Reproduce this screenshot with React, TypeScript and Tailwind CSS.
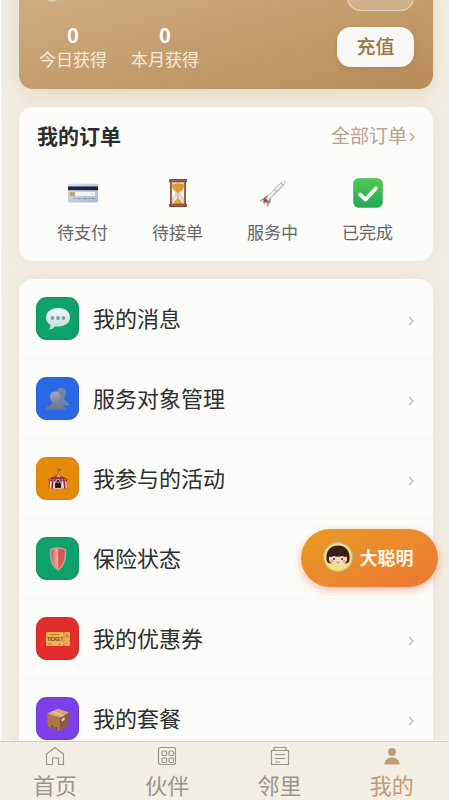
import type { ReactNode } from 'react';

function CardIcon() {
  return (
    <svg viewBox="0 0 32 32" className="size-[30px]" aria-hidden="true">
      <defs>
        <linearGradient id="card" x1="0" y1="0" x2="1" y2="1">
          <stop offset="0" stopColor="#d9e2ef" />
          <stop offset="1" stopColor="#a9bace" />
        </linearGradient>
      </defs>
      <rect x="0" y="6" width="32" height="20" rx="1.500" fill="url(#card)" />
      <rect x="0" y="9" width="32" height="4" fill="#1e2540" />
      <rect x="7" y="15" width="22" height="4" rx="1" fill="#f7f9fb" />
      <rect x="2" y="15" width="5.500" height="4.500" rx="1" fill="#bda569" />
      <path d="M6 22h3m1 0h4m2 0h4m1 0h3m1 0h4" stroke="#8797ad" strokeWidth="1" />
      <path d="M25 17h2" stroke="#9aa9bb" />
    </svg>
  );
}

function HourglassIcon() {
  return (
    <svg viewBox="0 0 32 32" className="size-[30px]" aria-hidden="true">
      <rect x="7.500" y="3" width="2" height="27" fill="#985338" />
      <rect x="22.500" y="3" width="2" height="27" fill="#985338" />
      <path d="M10 4h12v5c0 4-4 5-4 7.500s4 3.500 4 7.500v4H10v-4c0-4 4-5 4-7.500S10 13 10 9z" fill="#e4e3df" stroke="#b7aca3" strokeWidth=".7" />
      <path d="M10 7c3-1.500 9-1.500 12 0v2c0 3-4 5-6 7-2-2-6-4-6-7z" fill="#e19a28" />
      <path d="M16 14v9" stroke="#d79532" />
      <path d="M11 28c.5-3 3-5.500 5-6 2 .5 4.500 3 5 6z" fill="#eba135" />
      <rect x="6.500" y="1" width="19" height="3.500" rx=".7" fill="#8a4631" />
      <rect x="6.500" y="27.500" width="19" height="3.500" rx=".7" fill="#8a4631" />
      <path d="M8 2.500h16M8 29h16" stroke="#bc7957" strokeWidth=".7" />
    </svg>
  );
}

function RocketIcon() {
  return (
    <svg viewBox="0 0 32 32" className="size-[30px]" aria-hidden="true">
      <path d="M9 20 2.500 23l-.5 2 8-1zM14 23l-3 7-2 .5 1-7z" fill="#aaa9af" />
      <path d="M29.500 3c-4 .7-8 4.500-11 8L8 21.500l3 3L21.500 14c3.500-4 7-6 8-11z" fill="#d3d3d8" stroke="#9d9da4" strokeWidth=".6" />
      <path d="M28.500 3.500C23 9 16 15 9.500 22.500" stroke="#f7f7f8" strokeWidth="1.500" fill="none" />
      <path d="m24.500 5.500 2 2M17.500 12l2.500 2.500" stroke="#777780" strokeWidth=".8" />
      <path d="m7 21 4 4-3 3-4-3z" fill="#a64049" />
      <path d="m6 21 5-3-2 4zM10 26l4-5-1 6z" fill="#8c8b92" />
      <path d="m4 26 2-2m1 4 2-2" stroke="#ddd" strokeWidth="2" />
    </svg>
  );
}

function CheckIcon() {
  return (
    <svg viewBox="0 0 32 32" className="size-[30px]" aria-hidden="true">
      <defs>
        <linearGradient id="check" x1="0" y1="0" x2="0" y2="1">
          <stop offset="0" stopColor="#50cb52" />
          <stop offset="1" stopColor="#22a957" />
        </linearGradient>
      </defs>
      <rect x=".5" y=".5" width="31" height="31" rx="6" fill="url(#check)" stroke="#35b24c" strokeWidth=".6" />
      <path d="m7.500 17.500 6 5.500L24.500 11" fill="none" stroke="#fff" strokeWidth="4" strokeLinecap="round" strokeLinejoin="round" />
    </svg>
  );
}

function ChatIcon() {
  return (
    <svg viewBox="0 0 28 28" className="size-7" aria-hidden="true">
      <defs>
        <linearGradient id="chat" x1="0" y1="0" x2="0" y2="1">
          <stop offset="0" stopColor="#f5fbf9" />
          <stop offset="1" stopColor="#bddcd8" />
        </linearGradient>
      </defs>
      <path d="M14 3C7.300 3 2 7 2 12.500c0 3.500 2 6 4.500 7.500 0 2-1 3.500-2 4.500 3 0 5-1.200 6.500-3 8 .8 15-2.500 15-9S20.700 3 14 3z" fill="url(#chat)" />
      <circle cx="8.500" cy="13" r="1.900" fill="#849eac" />
      <circle cx="14" cy="13" r="1.900" fill="#849eac" />
      <circle cx="19.500" cy="13" r="1.900" fill="#849eac" />
    </svg>
  );
}

function PeopleIcon() {
  return (
    <svg viewBox="0 0 28 28" className="size-[26px]" aria-hidden="true">
      <defs>
        <linearGradient id="people" x1="0" y1="0" x2="0" y2="1">
          <stop offset="0" stopColor="#9aa5b8" />
          <stop offset="1" stopColor="#68758c" />
        </linearGradient>
      </defs>
      <path d="M17 2c4 0 6 3 5.500 7-.3 2-1.500 3.500-2 5 .5 3 6 3 6 7H13L12 8c0-3.500 2-6 5-6z" fill="#7485a3" />
      <path d="M11 6c4 0 6 3 5.500 7-.3 2.500-1.800 4-2 5.500 1 3 8 2.500 8.500 7H1c.5-4.500 6-4 7-7C7.500 17 6 15.500 5.500 13 5 9 7 6 11 6z" fill="url(#people)" />
    </svg>
  );
}

function TentIcon() {
  return (
    <svg viewBox="0 0 28 28" className="size-6" aria-hidden="true">
      <path d="M14 7V2l4 1-3 1.500" fill="#b54835" stroke="#9b6a34" strokeWidth=".8" />
      <path d="M14 6c-1 3-4 5-7 6v3h14v-3c-3-1-6-3-7-6z" fill="#b9424c" />
      <path d="M14 7c0 3-2 5-3 7h2l1-5 2 5h2c-1-2-3-4-4-7z" fill="#f3d9c9" />
      <path d="M4 15h20l1 10H3z" fill="#9f2635" />
      <path d="m5 15-1 10h2l1-10zm4 0-1 10h2l1-10zm9 0 1 10h2l-1-10zm4 0 1 10h1.500l-1-10z" fill="#f6e5da" />
      <path d="M2.500 14.500 7 12h14l4.500 2.500-1 2H3.500z" fill="#8e303a" />
      <path d="M4 15h20" stroke="#ebcdb9" strokeDasharray="2 1.500" />
      <path d="M10 25v-5a4 4 0 0 1 8 0v5z" fill="#23191d" stroke="#f4ded4" strokeWidth="1" />
      <circle cx="14" cy="16.500" r="2" fill="#37272e" stroke="#e8d2c6" strokeWidth=".7" />
    </svg>
  );
}

function ShieldIcon() {
  return (
    <svg viewBox="0 0 28 28" className="size-[26px]" aria-hidden="true">
      <defs>
        <linearGradient id="shield" x1="0" y1="0" x2="1" y2="0">
          <stop offset="0" stopColor="#c95352" />
          <stop offset=".44" stopColor="#efaa9c" />
          <stop offset=".56" stopColor="#dc5854" />
          <stop offset="1" stopColor="#d75150" />
        </linearGradient>
      </defs>
      <path d="M14 2c-3 0-6 .8-8 2-.6 9 .5 17 8 22 7.500-5 8.600-13 8-22-2-1.200-5-2-8-2z" fill="url(#shield)" stroke="#b6aaa0" strokeWidth="1.500" />
      <path d="M13.500 4v19" stroke="#edaaa0" strokeWidth=".8" />
    </svg>
  );
}

function TicketIcon() {
  return (
    <svg viewBox="0 0 28 28" className="size-7" aria-hidden="true">
      <path d="M3 7h16l1 1 1-1h4a1 1 0 0 1 1 1v3c-1 .5-1 1.500 0 2v2c-1 .5-1 1.500 0 2v3a1 1 0 0 1-1 1h-4l-1-1-1 1H3a1 1 0 0 1-1-1V8a1 1 0 0 1 1-1z" fill="#f2b14e" />
      <path d="M20 9v11" stroke="#ae7335" strokeDasharray="1 1" />
      <text x="11" y="15.700" textAnchor="middle" fontSize="4.500" fontWeight="700" fontFamily="Liberation Sans, sans-serif" fill="#683b22">TICKET</text>
      <path d="M6 9.500h9M4 19h4m6 0h3" stroke="#b3783a" strokeWidth=".9" />
      <path d="M22 10h2v2h-2zm0 8h2" stroke="#b3783a" strokeWidth=".8" fill="none" />
    </svg>
  );
}

function BoxIcon() {
  return (
    <svg viewBox="0 0 28 28" className="size-[26px]" aria-hidden="true">
      <path d="m2 8 12-5 12 4-10 6z" fill="#d5a574" />
      <path d="m2 8 14 5v14L3 22z" fill="#ad7648" />
      <path d="m26 7-10 6v14l9-6z" fill="#8d5b39" />
      <path d="m6 6.500 3.500-1.500L21 9.800 18 11.600z" fill="#e6c49a" opacity=".8" />
      <path d="m18 14 3-2v3l-3 2z" fill="#d6dadc" />
      <path d="m7 21 2 .7v2l-2-.7zm4 1.500 2 .7v2l-2-.7z" fill="#513c2d" />
    </svg>
  );
}

function Avatar() {
  return (
    <svg viewBox="0 0 32 32" className="size-8" aria-hidden="true">
      <circle cx="16" cy="16" r="14.500" fill="#f5e37a" stroke="#b9b578" strokeWidth="1.300" />
      <path d="M4.500 19C3.500 10 8 4.500 16 4.500S28.500 10 27.500 19c-.3 2.500-2 3.500-4 3.500h-15c-2 0-3.700-1-4-3.500z" fill="#3b211e" />
      <path d="M7 14h18v4c0 4-4 6.500-9 6.500S7 22 7 18z" fill="#f8d8c3" />
      <path d="M6 15.500 8 9h16l2 6.500c-3 .8-5 .3-6-.5-2 1-6 1-8 0-1 .8-3 1.300-6 .5z" fill="#3b211e" />
      <circle cx="12" cy="18" r="1" fill="#40231e" />
      <circle cx="20" cy="18" r="1" fill="#40231e" />
      <circle cx="9.800" cy="20.300" r="1.700" fill="#efaaa0" />
      <circle cx="22.200" cy="20.300" r="1.700" fill="#efaaa0" />
      <path d="M14.500 21c1 1 2 1 3 0" fill="none" stroke="#a95d52" />
    </svg>
  );
}

function Chevron({ className }: { className: string }) {
  return (
    <svg viewBox="0 0 6 10" className={className} fill="none" stroke="currentColor" strokeWidth="1.200" aria-hidden="true">
      <path d="m1 1 4 4-4 4" />
    </svg>
  );
}

const stats = [
  { value: 0, label: '今日获得' },
  { value: 0, label: '本月获得' },
];

const orders: { label: string; icon: ReactNode }[] = [
  { label: '待支付', icon: <CardIcon /> },
  { label: '待接单', icon: <HourglassIcon /> },
  { label: '服务中', icon: <RocketIcon /> },
  { label: '已完成', icon: <CheckIcon /> },
];

const menu: { label: string; tile: string; icon: ReactNode }[] = [
  { label: '我的消息', tile: 'bg-[#0ea16b]', icon: <ChatIcon /> },
  { label: '服务对象管理', tile: 'bg-[#2b68e5]', icon: <PeopleIcon /> },
  { label: '我参与的活动', tile: 'bg-[#e58b09]', icon: <TentIcon /> },
  { label: '保险状态', tile: 'bg-[#0ea16b]', icon: <ShieldIcon /> },
  { label: '我的优惠券', tile: 'bg-[#e22d2d]', icon: <TicketIcon /> },
  { label: '我的套餐', tile: 'bg-[#7c3fe8]', icon: <BoxIcon /> },
];

const tabs: { label: string; active?: boolean; icon: ReactNode }[] = [
  {
    label: '首页',
    icon: <path d="M1.500 8 10 1.500 18.500 8v10.500h-5V12h-6v6.500h-6z" />,
  },
  {
    label: '伙伴',
    icon: (
      <>
        <rect x="1.500" y="1.500" width="17" height="17" rx="2" />
        <rect x="5" y="5" width="4.500" height="4.500" rx="1" />
        <rect x="12" y="5" width="4.500" height="4.500" rx="1" />
        <rect x="5" y="12" width="4.500" height="4.500" rx="1" />
        <rect x="12" y="12" width="4.500" height="4.500" rx="1" />
      </>
    ),
  },
  {
    label: '邻里',
    icon: <path d="M1.500 4.500h17v14h-17zM4 4.500v-3h12v3M5 8.500h10M5 12.500h10M5 16h5" />,
  },
  {
    label: '我的',
    active: true,
    icon: (
      <g fill="currentColor" stroke="none">
        <circle cx="10" cy="6" r="4" />
        <path d="M2.500 18.500c0-4.500 3-7 7.500-7s7.500 2.500 7.500 7z" />
      </g>
    ),
  },
];

export default function App() {
  return (
    <div className="relative flex h-screen flex-col overflow-hidden bg-[#f3eee3] font-['Noto_Sans_CJK_SC','Liberation_Sans',sans-serif] text-[#2d2d2d]">
      <main className="flex min-h-0 flex-1 flex-col gap-[18px] overflow-hidden border-l border-white pr-4 pl-[18px]">
        <section className="-mt-4 shrink-0 rounded-b-[14px] bg-linear-to-br from-[#cfb083] to-[#b98c59] pr-[19px] pb-[18px] pl-5 shadow-[0_4px_18px_#c9b98766]">
          <div className="flex items-start justify-between">
            <span className="ml-1 size-[18px] rounded-full bg-[#dfcbb0]" />
            <button type="button" aria-label="明细" className="h-[27px] w-[67px] rounded-[14px] border border-white/50 bg-white/20" />
          </div>
          <div className="flex items-end justify-between pt-3">
            <dl className="flex gap-6">
              {stats.map((s) => (
                <div key={s.label} className="flex flex-col-reverse items-center">
                  <dt className="text-[17px] leading-6 text-[#f7ecd9]">{s.label}</dt>
                  <dd className="text-[20px] leading-6 font-bold text-white">{s.value}</dd>
                </div>
              ))}
            </dl>
            <button type="button" className="mb-1 h-10 w-[77px] rounded-[14px] bg-[#faf8f6] pb-0.5 text-[19px] leading-7 font-medium text-[#997445] shadow-[0_2px_5px_#7b5a3040]">
              充值
            </button>
          </div>
        </section>

        <section className="shrink-0 rounded-[14px] bg-[#fcfcfb] pt-[14px] pb-4 shadow-[0_0_14px_#dccfb959]">
          <div className="flex items-center justify-between pr-[18px] pl-[18px]">
            <h2 className="text-[21px] leading-7 font-bold">我的订单</h2>
            <a href="#orders" className="flex items-center gap-0.5 text-[19px] leading-7 text-[#b7a28c]">
              全部订单
              <Chevron className="mt-1 h-2.5 w-1.5" />
            </a>
          </div>
          <ul className="grid grid-cols-4 pt-[29px] pr-[18px] pl-4">
            {orders.map((o) => (
              <li key={o.label}>
                <button type="button" className="flex w-full flex-col items-center gap-3">
                  {o.icon}
                  <span className="pb-px text-[17px] leading-6 text-[#666]">{o.label}</span>
                </button>
              </li>
            ))}
          </ul>
        </section>

        <ul className="shrink-0 rounded-[14px] bg-[#fcfcfb] shadow-[0_0_14px_#dccfb959]">
          {menu.map((m) => (
            <li key={m.label} className="border-b border-[#f6f6f4]">
              <a href="#menu" className="flex h-[79px] items-center pr-[19px] pl-[17px]">
                <span className={`flex size-[43px] items-center justify-center rounded-[11px] shadow-[inset_0_0_2px_#00000040] ${m.tile}`}>{m.icon}</span>
                <span className="flex-1 pb-1 pl-[14px] text-[22px] leading-8">{m.label}</span>
                <Chevron className="mt-1 h-2.5 w-1.5 text-[#bdbdbd]" />
              </a>
            </li>
          ))}
        </ul>
      </main>

      <nav className="flex h-[59px] shrink-0 border-t border-[#d4d0c8] bg-[#f4efe4]">
        {tabs.map((t) => (
          <a
            key={t.label}
            href="#tab"
            aria-current={t.active ? 'page' : undefined}
            className={`flex flex-1 flex-col items-center gap-1 pt-1 pr-0.5 ${t.active ? 'text-[#c09b76]' : 'text-[#99958c]'}`}
          >
            <svg viewBox="0 0 20 20" className="size-5 shrink-0" fill="none" stroke="currentColor" strokeWidth="1.200" aria-hidden="true">
              {t.icon}
            </svg>
            <span className="text-[22px] leading-7">{t.label}</span>
          </a>
        ))}
      </nav>

      <button
        type="button"
        className="absolute right-[11px] bottom-[213px] flex h-[58px] w-[137px] items-center justify-center gap-1.5 rounded-full bg-linear-to-br from-[#e99a20] to-[#ed7735] pr-1 pb-0.5 text-[18px] leading-7 font-bold text-[#fff8e8] shadow-[0_3px_10px_#f4734073]"
      >
        <Avatar />
        大聪明
      </button>
    </div>
  );
}
